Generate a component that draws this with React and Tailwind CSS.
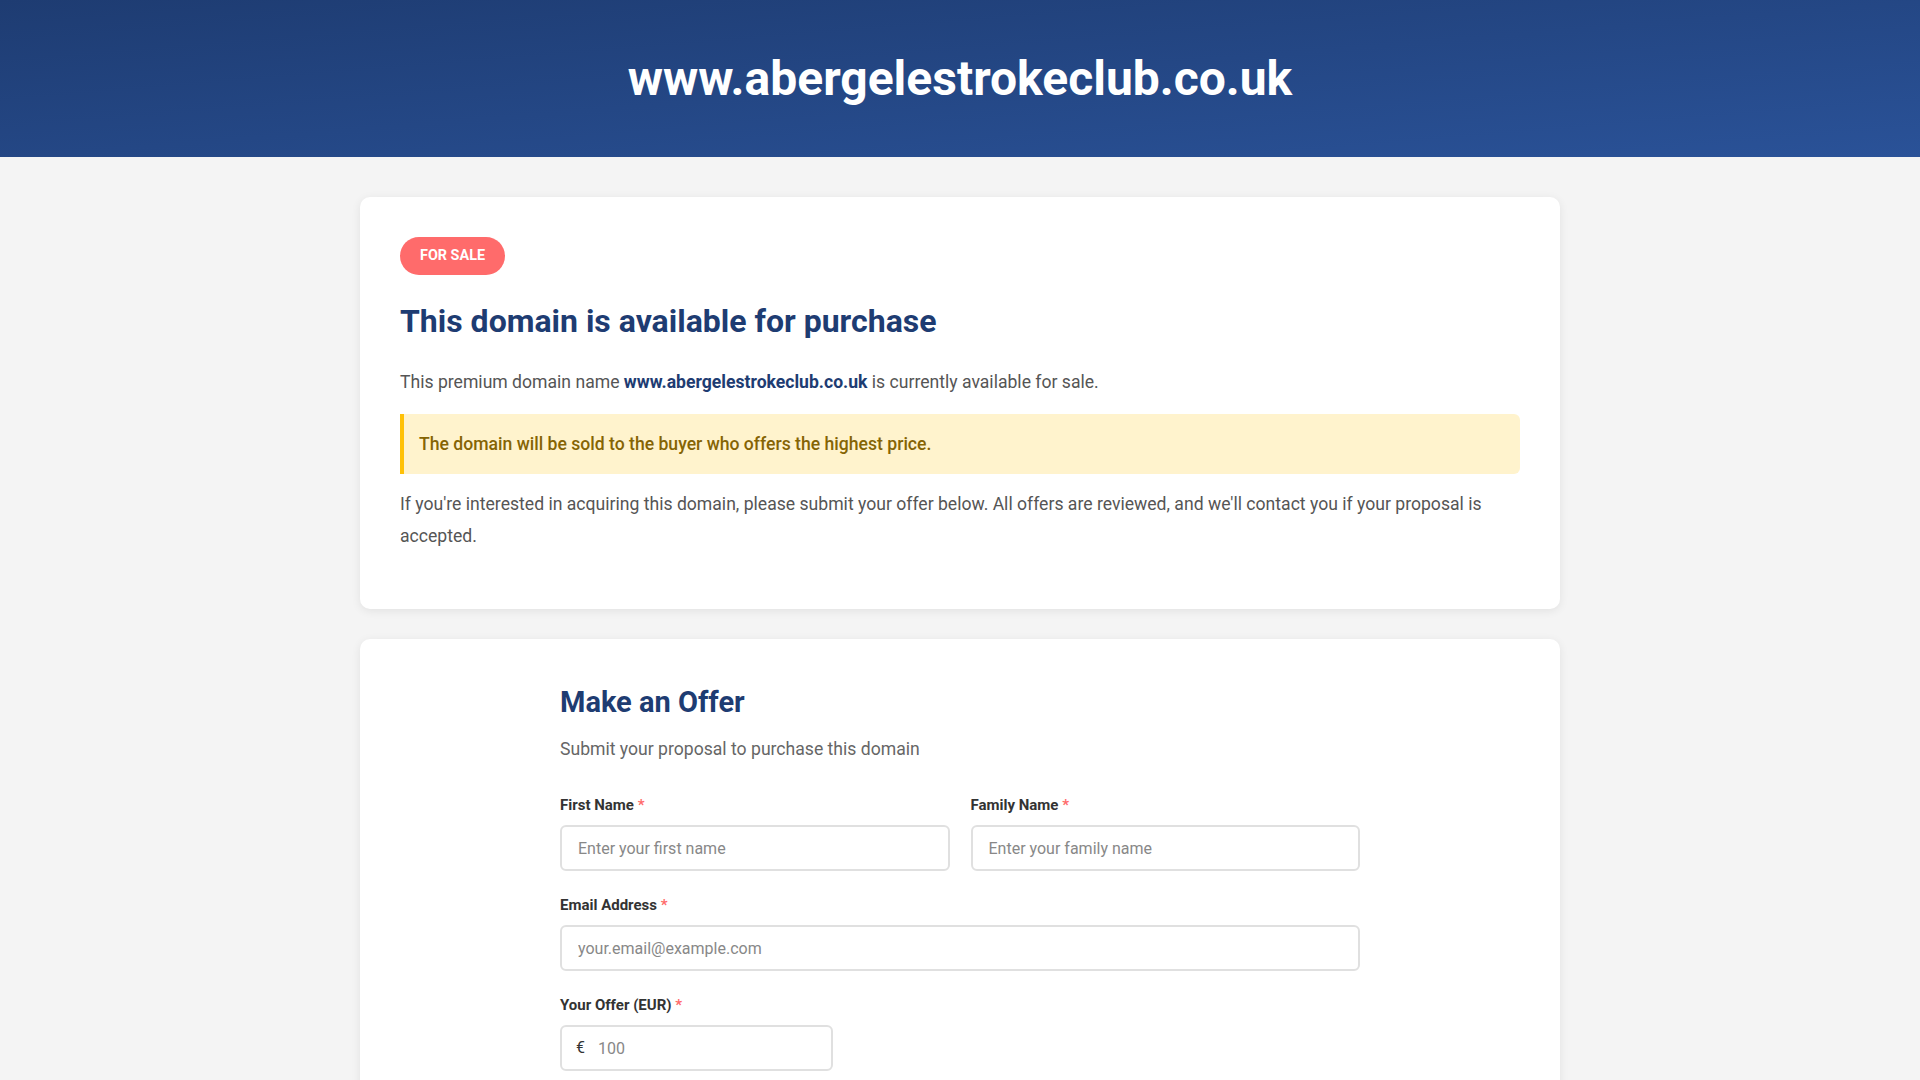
import React from 'react';

const Field = ({ label, children }) => (
  <div className="flex flex-col">
    <label className="text-[15px] leading-[20px] font-bold text-[#333]">
      {label} <span className="text-[#ff6b6b]">*</span>
    </label>
    <div className="mt-[10px]">{children}</div>
  </div>
);

const inputCls =
  'w-full h-[46px] px-[16px] border-2 border-[#e0e0e0] rounded-[6px] bg-white text-[16px] text-[#333] placeholder:text-[#888] outline-none';

const App = () => {
  return (
    <div className="min-h-screen bg-[#f4f4f4] font-['Roboto','Liberation_Sans',sans-serif]">
      {/* Header */}
      <header className="bg-gradient-to-br from-[#1e3c72] to-[#2a5298] py-[50px]">
        <h1 className="text-center text-white font-bold text-[48px] leading-[57px]">
          www.abergelestrokeclub.co.uk
        </h1>
      </header>

      <main className="w-[1200px] mx-auto pt-[40px] pb-[40px] flex flex-col gap-[30px]">
        {/* Info card */}
        <section className="bg-white rounded-[10px] shadow-[0_2px_10px_rgba(0,0,0,0.08)] px-[40px] pt-[40px] pb-[57px]">
          <span className="inline-block bg-[#ff6b6b] text-white font-bold text-[14.4px] leading-[20px] px-[20px] py-[9px] rounded-full uppercase">
            For Sale
          </span>
          <h2 className="mt-[26px] text-[32px] leading-[40px] font-bold text-[#1e3c72]">
            This domain is available for purchase
          </h2>
          <p className="mt-[25px] text-[17.6px] leading-[32px] text-[#555]">
            This premium domain name{' '}
            <strong className="font-bold text-[#1e3c72]">www.abergelestrokeclub.co.uk</strong> is
            currently available for sale.
          </p>
          <div className="mt-[16px] bg-[#fff3cd] border-l-4 border-[#ffc107] rounded-r-[6px] pl-[15px] pr-[20px] py-[16px]">
            <p className="text-[17.6px] leading-[28px] font-medium text-[#856404]">
              The domain will be sold to the buyer who offers the highest price.
            </p>
          </div>
          <p className="mt-[14px] text-[17.6px] leading-[32px] text-[#555]">
            If you're interested in acquiring this domain, please submit your offer below. All offers
            are reviewed, and we'll contact you if your proposal is accepted.
          </p>
        </section>

        {/* Offer form card */}
        <section className="bg-white rounded-[10px] shadow-[0_2px_10px_rgba(0,0,0,0.08)] pt-[45px] pb-[48px] px-[40px]">
          <div className="w-[800px] mx-auto">
            <h2 className="text-[29px] leading-[36px] font-bold text-[#1e3c72]">Make an Offer</h2>
            <p className="mt-[15px] text-[17.6px] leading-[28px] text-[#666]">
              Submit your proposal to purchase this domain
            </p>

            <form className="mt-[32px] flex flex-col gap-[24px]">
              <div className="grid grid-cols-2 gap-[21px]">
                <Field label="First Name">
                  <input className={inputCls} placeholder="Enter your first name" />
                </Field>
                <Field label="Family Name">
                  <input className={inputCls} placeholder="Enter your family name" />
                </Field>
              </div>
              <Field label="Email Address">
                <input className={inputCls} placeholder="your.email@example.com" />
              </Field>
              <Field label="Your Offer (EUR)">
                <div className="relative w-[273px]">
                  <span className="absolute left-[16px] top-1/2 -translate-y-1/2 text-[16px] text-[#333]">
                    €
                  </span>
                  <input className={inputCls + ' pl-[36px]'} placeholder="100" />
                </div>
              </Field>
            </form>
          </div>
        </section>
      </main>
    </div>
  );
};

export default App;
